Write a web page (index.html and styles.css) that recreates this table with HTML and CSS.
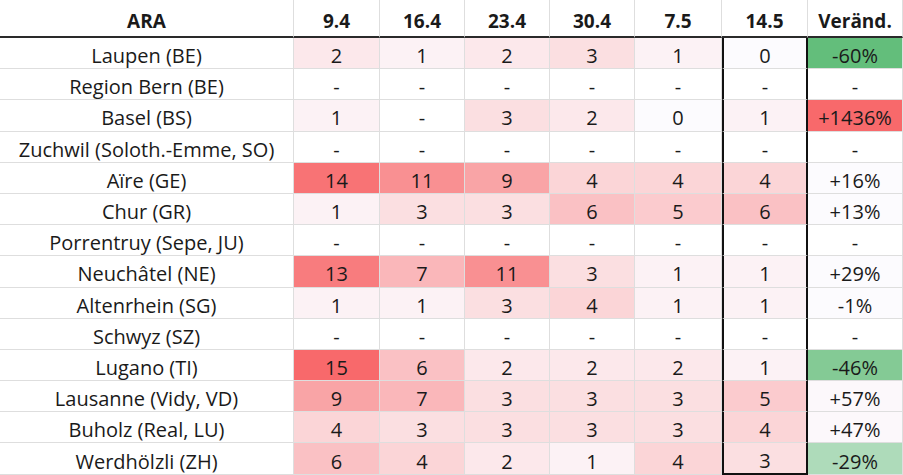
FILE: index.html
```html
<!DOCTYPE html>
<html lang="de">
<head>
<meta charset="utf-8">
<title>ARA</title>
<link rel="stylesheet" href="styles.css">
</head>
<body>
<div class="sheet">
  <div class="c h name">ARA</div><div class="c h">9.4</div><div class="c h">16.4</div><div class="c h">23.4</div><div class="c h">30.4</div><div class="c h">7.5</div><div class="c h">14.5</div><div class="c h">Veränd.</div>

  <div class="c name">Laupen (BE)</div><div class="c v2">2</div><div class="c v1">1</div><div class="c v2">2</div><div class="c v3">3</div><div class="c v1">1</div><div class="c box v0">0</div><div class="c g60">-60%</div>
  <div class="c name">Region Bern (BE)</div><div class="c">-</div><div class="c">-</div><div class="c">-</div><div class="c">-</div><div class="c">-</div><div class="c box">-</div><div class="c">-</div>
  <div class="c name">Basel (BS)</div><div class="c v1">1</div><div class="c">-</div><div class="c v3">3</div><div class="c v2">2</div><div class="c v0">0</div><div class="c box v1">1</div><div class="c rmax">+1436%</div>
  <div class="c name">Zuchwil (Soloth.-Emme, SO)</div><div class="c">-</div><div class="c">-</div><div class="c">-</div><div class="c">-</div><div class="c">-</div><div class="c box">-</div><div class="c">-</div>
  <div class="c name">Aïre (GE)</div><div class="c v14">14</div><div class="c v11">11</div><div class="c v9">9</div><div class="c v4">4</div><div class="c v4">4</div><div class="c box v4">4</div><div class="c p0">+16%</div>
  <div class="c name">Chur (GR)</div><div class="c v1">1</div><div class="c v3">3</div><div class="c v3">3</div><div class="c v6">6</div><div class="c v5">5</div><div class="c box v6">6</div><div class="c p0">+13%</div>
  <div class="c name">Porrentruy (Sepe, JU)</div><div class="c">-</div><div class="c">-</div><div class="c">-</div><div class="c">-</div><div class="c">-</div><div class="c box">-</div><div class="c">-</div>
  <div class="c name">Neuchâtel (NE)</div><div class="c v13">13</div><div class="c v7">7</div><div class="c v11">11</div><div class="c v3">3</div><div class="c v1">1</div><div class="c box v1">1</div><div class="c p0">+29%</div>
  <div class="c name">Altenrhein (SG)</div><div class="c v1">1</div><div class="c v1">1</div><div class="c v3">3</div><div class="c v4">4</div><div class="c v1">1</div><div class="c box v1">1</div><div class="c p0">-1%</div>
  <div class="c name">Schwyz (SZ)</div><div class="c">-</div><div class="c">-</div><div class="c">-</div><div class="c">-</div><div class="c">-</div><div class="c box">-</div><div class="c">-</div>
  <div class="c name">Lugano (TI)</div><div class="c v15">15</div><div class="c v6">6</div><div class="c v2">2</div><div class="c v2">2</div><div class="c v2">2</div><div class="c box v1">1</div><div class="c g46">-46%</div>
  <div class="c name">Lausanne (Vidy, VD)</div><div class="c v9">9</div><div class="c v7">7</div><div class="c v3">3</div><div class="c v3">3</div><div class="c v3">3</div><div class="c box v5">5</div><div class="c p1">+57%</div>
  <div class="c name">Buholz (Real, LU)</div><div class="c v4">4</div><div class="c v3">3</div><div class="c v3">3</div><div class="c v3">3</div><div class="c v3">3</div><div class="c box v4">4</div><div class="c p1">+47%</div>
  <div class="c name">Werdhölzli (ZH)</div><div class="c v6">6</div><div class="c v4">4</div><div class="c v2">2</div><div class="c v1">1</div><div class="c v4">4</div><div class="c box last v3">3</div><div class="c g29">-29%</div>
</div>
</body>
</html>
```
FILE: styles.css
```css
html, body {
  margin: 0;
  padding: 0;
  background: #ffffff;
}

.sheet {
  display: grid;
  grid-template-columns: 294px 86px 85px 85px 85px 87px 86px 95px;
  grid-template-rows: 38px repeat(14, 31.2px);
  width: 903px;
  font-family: "Open Sans", Lato, sans-serif;
  font-size: 20px;
  color: #1a1a1a;
}

.c {
  box-sizing: border-box;
  display: flex;
  align-items: center;
  justify-content: center;
  border-right: 1px solid #dedede;
  border-bottom: 1px solid #dedede;
  background: #ffffff;
  white-space: nowrap;
  padding-top: 5px;
}

.h {
  font-weight: bold;
  font-size: 19px;
  border-bottom: 2px solid #2a2a2a;
  padding-top: 6px;
}

.box {
  border-left: 2px solid #111111;
  border-right: 2px solid #111111;
}

.box.last {
  border-bottom: 2px solid #111111;
}

/* heat scale, 0..15 from #fcfcff to #f8696b */
.v0  { background: #fcfbfe; }
.v1  { background: #fcf2f5; }
.v2  { background: #fce8eb; }
.v3  { background: #fbdfe1; }
.v4  { background: #fbd5d7; }
.v5  { background: #fbcbce; }
.v6  { background: #fac1c4; }
.v7  { background: #fab7ba; }
.v9  { background: #f9a4a6; }
.v11 { background: #f99092; }
.v13 { background: #f87c7e; }
.v14 { background: #f87375; }
.v15 { background: #f8696b; }

/* change column: green - white - red */
.g60  { background: #63be7b; }
.g46  { background: #84ca95; }
.g29  { background: #aedbba; }
.p0   { background: #fcfbfe; }
.p1   { background: #fcf8fb; }
.rmax { background: #f8696b; }
```
